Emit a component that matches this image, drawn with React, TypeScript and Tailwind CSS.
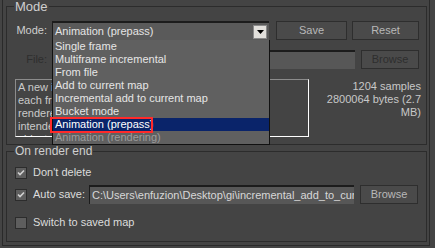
const items = [
  'Single frame',
  'Multiframe incremental',
  'From file',
  'Add to current map',
  'Incremental add to current map',
  'Bucket mode',
  'Animation (prepass)',
  'Animation (rendering)',
]

function Button({ label, width, dim }: { label: string; width: string; dim?: boolean }) {
  return (
    <div
      className={`${width} h-[19px] flex items-center justify-center border border-[#2e2e2e] bg-[#4a4a4a] ${
        dim ? 'text-[#2e2e2e]' : 'text-[#b8b8b8]'
      }`}
    >
      {label}
    </div>
  )
}

function Check({ checked }: { checked?: boolean }) {
  return (
    <div className="w-[12px] h-[12px] shrink-0 border border-[#2c2c2c] bg-[#5e5e5e] flex items-center justify-center">
      {checked && (
        <svg width="8" height="8" viewBox="0 0 8 8">
          <path d="M1 3.5 L3 5.5 L7 1.5" fill="none" stroke="#d2d2d2" strokeWidth="1.6" />
        </svg>
      )}
    </div>
  )
}

export default function App() {
  return (
    <div className="w-[435px] h-[248px] overflow-hidden bg-[#444444] text-[11px] leading-[13px] text-[#dcdcdc] font-['Liberation_Sans',Arial,sans-serif]">
      <div className="ml-[2px] w-[428px] h-[246px] border-l border-r border-b border-[#2a2a2a] pl-[3px] pr-[2px]">
        {/* Mode */}
        <fieldset className="h-[145px] border border-[#2c2c2c] px-0 pt-[8px]">
          <legend className="ml-[7px] px-[1px] text-[13px] leading-[13px] text-[#cfcfcf]">Mode</legend>

          <div className="flex items-center h-[19px]">
            <div className="w-[40px] text-right text-[#cfcfcf]">Mode:</div>
            <div className="relative ml-[5px] w-[217px] h-[19px] flex items-center bg-[#5a5a5a] border-t-2 border-l border-[#1c1c1c]">
              <span className="pl-[2px] text-[#e4e4e4]">Animation (prepass)</span>
              <div className="ml-auto mr-[2px] w-[14px] h-[14px] bg-[#e2e0dc] border border-[#8a8a8a] flex items-center justify-center">
                <svg width="7" height="4" viewBox="0 0 7 4">
                  <path d="M0 0 H7 L3.5 4 Z" fill="#000" />
                </svg>
              </div>

              {/* open list */}
              <div className="absolute left-[-1px] top-full z-10 w-[218px] h-[105px] bg-[#606060] border border-t-0 border-[#111]">
                {items.map((it) => {
                  const sel = it === 'Animation (prepass)'
                  const off = it === 'Animation (rendering)'
                  return (
                    <div
                      key={it}
                      className={`relative h-[13px] pl-[2px] whitespace-nowrap ${sel ? 'bg-[#0a246a] text-white' : off ? 'text-[#9c9c9c]' : 'text-[#e6e6e6]'}`}
                    >
                      {it}
                      {sel && (
                        <div className="absolute left-[-3px] top-[-1px] w-[103px] h-[16px] border-2 border-[#ff2a2a]" />
                      )}
                    </div>
                  )
                })}
              </div>
            </div>
            <div className="ml-[7px]">
              <Button label="Save" width="w-[71px]" />
            </div>
            <div className="ml-[5px]">
              <Button label="Reset" width="w-[67px]" />
            </div>
          </div>

          <div className="flex items-center h-[19px] mt-[10px]">
            <div className="w-[40px] text-right text-[#2e2e2e]">File:</div>
            <div className="ml-[5px] w-[303px] h-[19px] bg-[#575757] border-t-2 border-l border-[#1c1c1c]" />
            <div className="ml-[6px]">
              <Button label="Browse" width="w-[58px]" dim />
            </div>
          </div>

          <div className="flex mt-[10px]">
            <div className="ml-[8px] w-[294px] h-[58px] overflow-hidden border border-t-[#8c8c8c] border-l-[#8c8c8c] border-r-white border-b-white pl-[2px] pt-[1px] text-[#cacaca]">
              <div>A new irradiance map is created separately for</div>
              <div>each frame; no final image is</div>
              <div>rendered; this mode is</div>
              <div>intended for animations with moving</div>
              <div>objects.</div>
            </div>
            <div className="ml-auto pr-[5px] pt-[1px] text-right text-[#c8c8c8]">
              <div>1204 samples</div>
              <div>2800064 bytes (2.7</div>
              <div>MB)</div>
            </div>
          </div>
        </fieldset>

        {/* On render end */}
        <fieldset className="h-[97px] border border-[#2c2c2c] px-0 pt-[8px]">
          <legend className="ml-[7px] px-[1px] text-[12px] leading-[13px] text-[#cfcfcf]">On render end</legend>

          <div className="flex items-center h-[13px] pl-[8px] gap-[6px]">
            <Check checked />
            <span>Don't delete</span>
          </div>

          <div className="flex items-center h-[19px] mt-[6px] pl-[8px]">
            <Check checked />
            <span className="ml-[6px] whitespace-nowrap">Auto save:</span>
            <div className="ml-[4px] w-[265px] h-[19px] shrink-0 overflow-hidden whitespace-nowrap flex items-center bg-[#575757] border-t-2 border-l border-[#1c1c1c] pl-[2px] text-[#d8d8d8]">
              C:\Users\enfuzion\Desktop\gi\incremental_add_to_current_map.vrmap
            </div>
            <div className="ml-[6px]">
              <Button label="Browse" width="w-[58px]" />
            </div>
          </div>

          <div className="flex items-center h-[13px] mt-[12px] pl-[8px] gap-[6px]">
            <Check />
            <span>Switch to saved map</span>
          </div>
        </fieldset>
      </div>
    </div>
  )
}
